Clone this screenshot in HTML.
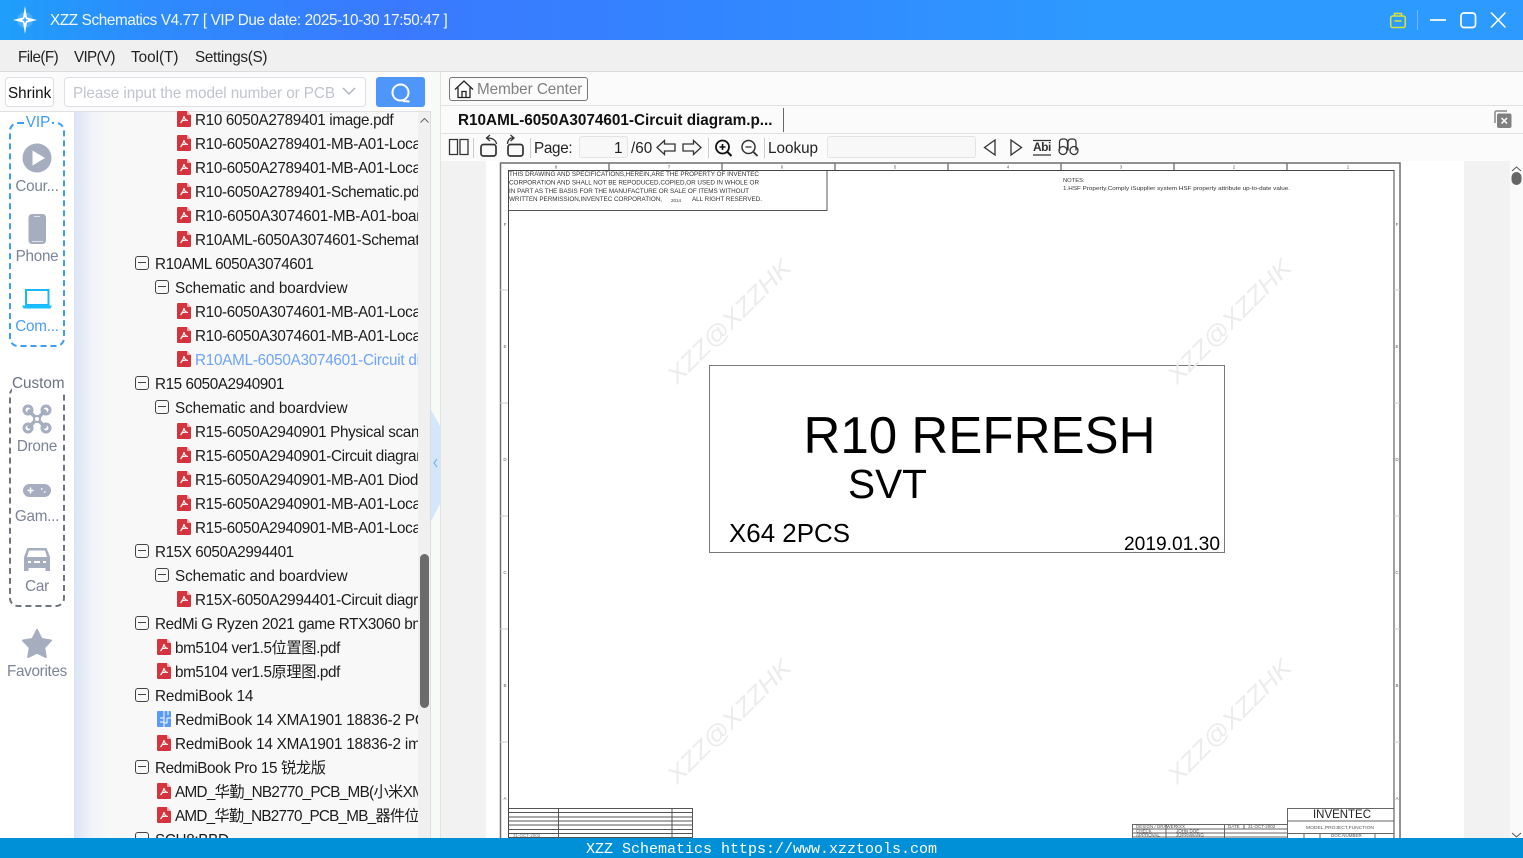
<!DOCTYPE html>
<html><head><meta charset="utf-8"><style>
*{box-sizing:border-box;margin:0;padding:0}
html,body{width:1523px;height:858px;overflow:hidden;background:#fff}
body{position:relative;font-family:"Liberation Sans","Noto Sans CJK SC",sans-serif;font-size:15.25px;color:#222}
.a{position:absolute}
.t{position:absolute;white-space:nowrap;line-height:22px}
svg{position:absolute;overflow:visible}
#tree{position:absolute;left:0;top:0;width:418px;height:838px;overflow:hidden}
.r{position:absolute;white-space:nowrap;line-height:24px;height:24px;color:#1c1c1c;letter-spacing:-.33px}
.r svg{left:0;top:2px;width:14px;height:16px}
.l3{left:177px;padding-left:18px}
.l2{left:157px;padding-left:18px}
.b1{left:135px;padding-left:20px}
.b2{left:155px;padding-left:20px;letter-spacing:-.09px}
.b1 i,.b2 i{position:absolute;left:0;top:3px;width:14px;height:14px;border:1px solid #444;border-radius:3px}
.b1 i:after,.b2 i:after{content:"";position:absolute;left:2px;right:2px;top:5px;height:1px;background:#444}
.sl{position:absolute;left:0;width:74px;text-align:center;line-height:22px;color:#7b8496;white-space:nowrap;letter-spacing:-.25px}
.sep{position:absolute;top:138px;width:1px;height:20px;background:#ccc}
</style></head><body>
<svg width="0" height="0" style="position:absolute"><defs>
<symbol id="pdf" viewBox="0 0 14 16"><path d="M1 0H10L14 4V15a1 1 0 0 1-1 1H1a1 1 0 0 1-1-1V1a1 1 0 0 1 1-1Z" fill="#d5343f"/><path d="M10 0L14 4H10Z" fill="#f2b0b4"/><path d="M7 5C6.500 7.500 5.400 10 3.500 12M7 5C7.300 7.500 8.800 9.300 11 9.600M4 10.500C6 9.300 8.500 9 10.500 9.500" stroke="#fff" stroke-width="1.100" fill="none"/></symbol>
<symbol id="pcb" viewBox="0 0 14 16"><rect width="14" height="16" rx="1" fill="#5b9bf5"/><path d="M7 0V7H3M7 7V16M11 0V4M3 11H7M10 7H14M10 7V12H7" stroke="#fff" stroke-width="1" fill="none"/></symbol>
</defs></svg>

<!-- title bar -->
<div class="a" style="left:0;top:0;width:1523px;height:40px;background:linear-gradient(90deg,#1f9ffb 0,#2d8bfd 150px,#3a79ff 400px,#3384ff 700px,#2d9aff 1100px,#2d9aff 100%)"></div>
<svg style="left:0;top:0" width="60" height="40"><path d="M25 6L27 17.500L37 20L27 22.500L25 34L23 22.500L13 20L23 17.500Z" fill="#fff"/><circle cx="25" cy="20" r="8" fill="#fff" opacity=".18"/><path d="M22.500 20H27.500M25 17.500V22.500" stroke="#2f96f8" stroke-width="1.300"/></svg>
<div class="t" style="left:50px;top:10px;color:#fff;opacity:.94;letter-spacing:-.35px">XZZ Schematics V4.77 [ VIP Due date: 2025-10-30 17:50:47 ]</div>
<svg style="left:1380px;top:0" width="143" height="40" fill="none"><rect x="10.700" y="16" width="14.600" height="11.500" rx="2" stroke="#d8e23a" stroke-width="1.500"/><path d="M14.500 16V13.500h7V16M14.500 21h7" stroke="#d8e23a" stroke-width="1.500"/><path d="M37.500 10V30" stroke="#7ab8fa"/><path d="M50 20H66" stroke="#fff" stroke-width="1.700"/><rect x="81" y="13" width="14.500" height="14.500" rx="3" stroke="#fff" stroke-width="1.700"/><path d="M111 12.500L125.500 27.500M125.500 12.500L111 27.500" stroke="#fff" stroke-width="1.600"/></svg>

<!-- menu -->
<div class="a" style="left:0;top:40px;width:1523px;height:32px;background:#f0f0f0;border-bottom:1px solid #dcdcdc"></div>
<div class="t" style="left:18px;top:47px;letter-spacing:-.55px">File(F)</div>
<div class="t" style="left:74px;top:47px;letter-spacing:-.7px">VIP(V)</div>
<div class="t" style="left:131px;top:47px">Tool(T)</div>
<div class="t" style="left:195px;top:47px;letter-spacing:-.3px">Settings(S)</div>

<!-- search row -->
<div class="a" style="left:0;top:72px;width:431px;height:40px;background:#fbfbfb;border-bottom:1px solid #e0e0e0"></div>
<div class="a" style="left:5px;top:77px;width:49px;height:30px;background:#fff;border:1px solid #dcdfe6;border-radius:4px"></div>
<div class="t" style="left:8px;top:83px;color:#111">Shrink</div>
<div class="a" style="left:64px;top:77px;width:302px;height:30px;background:#fff;border:1px solid #dcdfe6;border-radius:4px"></div>
<div class="t" style="left:73px;top:83px;color:#c0c4cc;letter-spacing:-.07px">Please input the model number or PCB</div>
<svg style="left:342px;top:87px" width="14" height="9" fill="none"><path d="M1 1L7 7L13 1" stroke="#aab0b8" stroke-width="1.300"/></svg>
<div class="a" style="left:376px;top:77px;width:49px;height:30px;background:#4f96fb;border-radius:3px"></div>
<svg style="left:390px;top:82px" width="22" height="22" fill="none"><circle cx="10.500" cy="10.500" r="8" stroke="#fff" stroke-width="2"/><path d="M13 19L19.500 19.500" stroke="#fff" stroke-width="2"/></svg>

<!-- tree bg -->
<div class="a" style="left:0;top:112px;width:74px;height:726px;background:#fff"></div>
<div class="a" style="left:74px;top:112px;width:344px;height:726px;background:linear-gradient(90deg,#dbe5f5 0,#f0f3f8 18px,#f8f8f8 36px)"></div>
<div class="a" style="left:418px;top:112px;width:13px;height:726px;background:#f0f0f0;border-right:1px solid #ddd"></div>
<div class="a" style="left:431px;top:72px;width:10px;height:766px;background:#f7fbf7;border-right:1px solid #e2e2e2"></div>
<svg style="left:431px;top:408px" width="10" height="115"><path d="M0 2L9 18V96L0 113Z" fill="#d3e7fb"/><path d="M6 51L3 55L6 59" stroke="#7fb2ea" fill="none" stroke-width="1.200"/></svg>
<svg style="left:418px;top:112px" width="13" height="20" fill="none"><path d="M2.500 10.500L6.500 6.500L10.500 10.500" stroke="#666"/></svg>
<div class="a" style="left:420px;top:554px;width:9px;height:154px;background:#6b6b6b;border-radius:5px"></div>

<div id="tree">
<div class="r l3" style="top:109px"><svg><use href="#pdf"/></svg>R10 6050A2789401 image.pdf</div>
<div class="r l3" style="top:133px"><svg><use href="#pdf"/></svg>R10-6050A2789401-MB-A01-Location</div>
<div class="r l3" style="top:157px"><svg><use href="#pdf"/></svg>R10-6050A2789401-MB-A01-Location</div>
<div class="r l3" style="top:181px"><svg><use href="#pdf"/></svg>R10-6050A2789401-Schematic.pdf</div>
<div class="r l3" style="top:205px;letter-spacing:-.22px"><svg><use href="#pdf"/></svg>R10-6050A3074601-MB-A01-boardview</div>
<div class="r l3" style="top:229px"><svg><use href="#pdf"/></svg>R10AML-6050A3074601-Schematic</div>
<div class="r b1" style="top:253px;letter-spacing:-.42px"><i></i>R10AML 6050A3074601</div>
<div class="r b2" style="top:277px"><i></i>Schematic and boardview</div>
<div class="r l3" style="top:301px"><svg><use href="#pdf"/></svg>R10-6050A3074601-MB-A01-Location</div>
<div class="r l3" style="top:325px"><svg><use href="#pdf"/></svg>R10-6050A3074601-MB-A01-Location</div>
<div class="r l3" style="top:349px;color:#6fa3f7;letter-spacing:-.25px"><svg><use href="#pdf"/></svg>R10AML-6050A3074601-Circuit diagram.pdf</div>
<div class="r b1" style="top:373px;letter-spacing:-.42px"><i></i>R15 6050A2940901</div>
<div class="r b2" style="top:397px"><i></i>Schematic and boardview</div>
<div class="r l3" style="top:421px"><svg><use href="#pdf"/></svg>R15-6050A2940901 Physical scanning</div>
<div class="r l3" style="top:445px"><svg><use href="#pdf"/></svg>R15-6050A2940901-Circuit diagram</div>
<div class="r l3" style="top:469px"><svg><use href="#pdf"/></svg>R15-6050A2940901-MB-A01 Diode</div>
<div class="r l3" style="top:493px"><svg><use href="#pdf"/></svg>R15-6050A2940901-MB-A01-Location</div>
<div class="r l3" style="top:517px"><svg><use href="#pdf"/></svg>R15-6050A2940901-MB-A01-Location</div>
<div class="r b1" style="top:541px;letter-spacing:-.42px"><i></i>R15X 6050A2994401</div>
<div class="r b2" style="top:565px"><i></i>Schematic and boardview</div>
<div class="r l3" style="top:589px"><svg><use href="#pdf"/></svg>R15X-6050A2994401-Circuit diagram</div>
<div class="r b1" style="top:613px;letter-spacing:-.36px"><i></i>RedMi G Ryzen 2021 game RTX3060 bm5104</div>
<div class="r l2" style="top:637px;letter-spacing:-.4px"><svg><use href="#pdf"/></svg>bm5104 ver1.5位置图.pdf</div>
<div class="r l2" style="top:661px;letter-spacing:-.4px"><svg><use href="#pdf"/></svg>bm5104 ver1.5原理图.pdf</div>
<div class="r b1" style="top:685px;letter-spacing:-.15px"><i></i>RedmiBook 14</div>
<div class="r l2" style="top:709px;letter-spacing:-.2px"><svg><use href="#pcb"/></svg>RedmiBook 14 XMA1901 18836-2 PCB</div>
<div class="r l2" style="top:733px;letter-spacing:-.2px"><svg><use href="#pdf"/></svg>RedmiBook 14 XMA1901 18836-2 image</div>
<div class="r b1" style="top:757px;letter-spacing:-.37px"><i></i>RedmiBook Pro 15 锐龙版</div>
<div class="r l2" style="top:781px;letter-spacing:-.68px"><svg><use href="#pdf"/></svg>AMD_华勤_NB2770_PCB_MB(小米XMA1</div>
<div class="r l2" style="top:805px;letter-spacing:-.75px"><svg><use href="#pdf"/></svg>AMD_华勤_NB2770_PCB_MB_器件位号</div>
<div class="r b1" style="top:829px"><i></i>SCH8:BBD</div>
</div>

<!-- sidebar -->
<div class="a" style="left:9px;top:122px;width:56px;height:225px;border:2px dashed #3d9cf5;border-radius:9px"></div>
<div class="t" style="left:24px;top:112px;width:28px;text-align:center;background:#fff;color:#3d9cf5;line-height:20px;margin-top:1px">VIP</div>
<svg style="left:0;top:110px" width="74" height="240"><circle cx="37" cy="48" r="14.500" fill="#a5adbf"/><path d="M32.500 40.500L45 48L32.500 55.500Z" fill="#fff"/><rect x="28.500" y="104" width="17.500" height="30" rx="3.500" fill="#a5adbf"/><path d="M34 106.500h6M32 131.500h11" stroke="#dfe2e8"/><rect x="26" y="180" width="22.500" height="15" fill="none" stroke="#1ab8f8" stroke-width="2"/><path d="M22 195.500h30l-1.500 3h-27Z" fill="#18c0ff"/></svg>
<div class="sl" style="top:176px">Cour...</div>
<div class="sl" style="top:246px">Phone</div>
<div class="sl" style="top:316px;color:#4b9cf5">Com...</div>

<div class="a" style="left:9px;top:386px;width:56px;height:221px;border:2px dashed #6e7482;border-radius:9px"></div>
<div class="t" style="left:12px;top:374px;width:52px;height:20px;line-height:20px;text-align:center;background:#fff;color:#6b7280">Custom</div>
<svg style="left:0;top:370px" width="74" height="320" fill="none"><path d="M28 40L46 58M46 40L28 58" stroke="#a5adbf" stroke-width="3.500"/><g stroke="#a5adbf" stroke-width="3"><circle cx="28" cy="40" r="4"/><circle cx="46" cy="40" r="4"/><circle cx="28" cy="58" r="4"/><circle cx="46" cy="58" r="4"/></g><circle cx="37" cy="49" r="3" fill="#fff" stroke="#a5adbf" stroke-width="2"/><rect x="23" y="114" width="28" height="13" rx="6.500" fill="#a5adbf"/><path d="M27.500 120.500h6M30.500 117.500v6M41 119h1.500M44 122h1.500" stroke="#fff" stroke-width="1.500"/><path d="M24 187l3.500-9h19l3.500 9v14h-4.500v-3h-17v3H24Z" fill="#a5adbf"/><path d="M29 180.500h16l2 6.500H27Z" fill="#fff"/><path d="M28 192h3M34 192h6M43 192h3" stroke="#fff" stroke-width="2"/><path d="M37 260l4.500 9 9.500 1.500-6.800 7 1.600 9.500-8.800-4.300-8.800 4.300 1.600-9.500-6.800-7 9.500-1.500Z" fill="#a5adbf" stroke="#a5adbf" stroke-width="2" stroke-linejoin="round"/></svg>
<div class="sl" style="top:436px">Drone</div>
<div class="sl" style="top:506px">Gam...</div>
<div class="sl" style="top:576px">Car</div>
<div class="sl" style="top:661px;letter-spacing:-.3px">Favorites</div>

<!-- right rows -->
<div class="a" style="left:441px;top:72px;width:1082px;height:34px;background:#fbfbfb;border-bottom:1px solid #e0e0e0"></div>
<div class="a" style="left:449px;top:77px;width:139px;height:24px;border:1px solid #777;border-radius:3px"></div>
<svg style="left:454px;top:79px" width="20" height="20" fill="none" stroke="#222" stroke-width="1.300"><path d="M1 10.500L10 2L19 10.500M4 8.500V18.500H16V8.500M8 18.500V12.500H12V18.500"/></svg>
<div class="t" style="left:477px;top:79px;color:#808080;letter-spacing:-.05px">Member Center</div>
<div class="a" style="left:441px;top:106px;width:1082px;height:28px;background:#fbfbfb;border-bottom:1px solid #e0e0e0"></div>
<div class="t" style="left:458px;top:110px;font-weight:700;color:#111;font-size:15.300px">R10AML-6050A3074601-Circuit diagram.p...</div>
<div class="a" style="left:783px;top:108px;width:1px;height:24px;background:#666"></div>
<svg style="left:1493px;top:109px" width="20" height="20"><path d="M2 14V3.500A1.500 1.500 0 0 1 3.500 2H14" fill="none" stroke="#888" stroke-width="1.500"/><rect x="4" y="4.500" width="14.500" height="14.500" rx="2" fill="#808080"/><path d="M8.500 9L14 14.500M14 9L8.500 14.500" stroke="#fff" stroke-width="1.500"/></svg>

<!-- toolbar -->
<div class="a" style="left:441px;top:134px;width:1082px;height:27px;background:#fbfbfb"></div>
<svg style="left:445px;top:132px" width="640" height="30" fill="none" stroke="#333" stroke-width="1.300"><path d="M4.500 7.500h8v15h-8ZM15 7.500h8v15h-8Z"/><rect x="36" y="12.500" width="15" height="11.500" rx="2.500" stroke-width="1.700"/><path d="M41 6H43C47 6 51 8 51.500 12M45 3L41.500 6L45 9"/><rect x="63" y="12.500" width="15" height="11.500" rx="2.500" stroke-width="1.700"/><path d="M69 6H67C65 6 62.500 8 62.500 12M65.500 3L69 6L65.500 9"/><path d="M212 15.500L219.500 8.500V12H230V19H219.500V22.500Z"/><path d="M256 15.500L248.500 8.500V12H238V19H248.500V22.500Z"/><circle cx="277.500" cy="15" r="6.500" stroke="#111" stroke-width="1.800"/><path d="M282.500 20L286.500 24" stroke="#111" stroke-width="2"/><path d="M274.500 15h6M277.500 12v6" stroke="#111" stroke-width="1.600"/><circle cx="303.500" cy="15" r="6.500" stroke-width="1.500"/><path d="M308.500 20L312.500 24" stroke-width="1.800"/><path d="M300.500 15h6"/><path d="M550 8L539.500 15.500L550 23Z"/><path d="M566 8L576.500 15.500L566 23Z"/><path d="M588 8.500H606M588 23H606" stroke-width="1.200"/><path d="M614.500 18.500V10a3 3 0 0 1 3-3h2a3 3 0 0 1 3 3v8.500M623 10v8.500M623 10a3 3 0 0 1 3-3h2a3 3 0 0 1 3 3v8.500"/><circle cx="618" cy="18.500" r="4"/><circle cx="629" cy="18.500" r="4"/></svg>
<div class="t" style="left:1033px;top:136px;font-size:12px;font-weight:700;color:#333;letter-spacing:-.5px">Abi</div>
<div class="sep" style="left:473px"></div><div class="sep" style="left:530px"></div><div class="sep" style="left:708px"></div><div class="sep" style="left:764px"></div>
<div class="t" style="left:534px;top:138px;color:#222;letter-spacing:-.3px">Page:</div>
<div class="a" style="left:579px;top:136px;width:49px;height:22px;background:#f8f8f8;border:1px solid #e4e4e4;border-radius:3px"></div>
<div class="t" style="left:614px;top:138px;color:#222">1</div>
<div class="t" style="left:631px;top:138px;color:#222">/60</div>
<div class="t" style="left:768px;top:138px;color:#222">Lookup</div>
<div class="a" style="left:827px;top:136px;width:149px;height:22px;background:#f8f8f8;border:1px solid #e4e4e4;border-radius:3px"></div>

<!-- viewer -->
<div class="a" style="left:441px;top:161px;width:1069px;height:677px;background:#f2f2f2"></div>
<div class="a" style="left:1510px;top:161px;width:13px;height:677px;background:#fafafa"></div>
<svg style="left:1510px;top:161px" width="13" height="677" fill="none"><path d="M2 10L6.500 6L11 10" stroke="#555"/><rect x="1.500" y="11" width="10" height="13" rx="5" fill="#666"/><path d="M2 672L6.500 676L11 672" stroke="#555"/></svg>
<div class="a" style="left:486px;top:161px;width:978px;height:677px;background:#fff"></div>

<svg style="left:0;top:0" width="1523" height="838" viewBox="0 0 1523 838" font-family="Liberation Sans, sans-serif">
<g fill="none" stroke="#6e6e6e">
<rect x="500.500" y="163" width="899.500" height="700" stroke-width="1.500"/>
<rect x="508.500" y="170.500" width="885.500" height="690" stroke="#444"/>
<path d="M609 163V170M722 163V170M835 163V170M948 163V170M1061 163V170M1174 163V170M1287 163V170" stroke-width="1.300"/>
<path d="M500 290H508M500 403H508M500 516H508M500 629H508M500 742H508M1394 290H1400M1394 403H1400M1394 516H1400M1394 629H1400M1394 742H1400" stroke="#ccc"/>
<path d="M508.500 210.500H827V170.500" stroke="#555"/>
<path d="M508.500 808.500H693M508.500 812.500H693M508.500 817H693M508.500 821H693M508.500 825H693M508.500 829.500H693M508.500 833.500H693M508.500 837.500H693M558.500 808V838M672 808V838M692.500 808V838" stroke="#555"/>
<path d="M1287.500 838V808.500H1394M1287 821H1394M1287 833.500H1394M1132.500 838V824.500H1287M1132 829H1287M1132 833H1287M1132 837H1287M1166 824V838M1224.500 824V838M1244 824V829M1304 833V838M1320 833V838M1375 833V838" stroke="#666"/>
<rect x="709.500" y="365.500" width="515" height="187" stroke="#777"/>
</g>
<g fill="#333" font-size="6.400">
<text x="509" y="176" textLength="250" lengthAdjust="spacingAndGlyphs">THIS DRAWING AND SPECIFICATIONS,HEREIN,ARE THE PROPERTY OF INVENTEC</text>
<text x="509" y="184.500" textLength="250" lengthAdjust="spacingAndGlyphs">CORPORATION AND SHALL NOT BE REPODUCED,COPIED,OR USED IN WHOLE OR</text>
<text x="509" y="193" textLength="240" lengthAdjust="spacingAndGlyphs">IN PART AS THE BASIS FOR THE MANUFACTURE OR SALE OF ITEMS WITHOUT</text>
<text x="509" y="201" textLength="153" lengthAdjust="spacingAndGlyphs">WRITTEN PERMISSION,INVENTEC CORPORATION,</text>
<text x="671" y="202" font-size="4.500">2014</text>
<text x="692" y="201" textLength="70" lengthAdjust="spacingAndGlyphs">ALL RIGHT RESERVED.</text>
<text x="1063" y="182" font-size="5.800">NOTES:</text>
<text x="1063" y="190" textLength="227" font-size="5.800" lengthAdjust="spacingAndGlyphs">1.HSF Property.Comply iSupplier system HSF property attribute up-to-date value.</text>
</g>
<g fill="#555" font-size="4.500" text-anchor="middle">
<text x="556" y="168.500">8</text><text x="669" y="168.500">7</text><text x="782" y="168.500">6</text><text x="895" y="168.500">5</text><text x="1008" y="168.500">4</text><text x="1121" y="168.500">3</text><text x="1234" y="168.500">2</text><text x="1348" y="168.500">1</text>
<text x="505" y="226">F</text><text x="505" y="348">E</text><text x="505" y="461">D</text><text x="505" y="574">C</text><text x="505" y="687">B</text><text x="505" y="800">A</text>
<text x="1397" y="226">F</text><text x="1397" y="348">E</text><text x="1397" y="461">D</text><text x="1397" y="574">C</text><text x="1397" y="687">B</text><text x="1397" y="800">A</text>
</g>
<g fill="#ececec" font-size="24" font-style="italic">
<text transform="translate(677,385) rotate(-45)" textLength="164" lengthAdjust="spacingAndGlyphs">XZZ@XZZHK</text>
<text transform="translate(1177,385) rotate(-45)" textLength="164" lengthAdjust="spacingAndGlyphs">XZZ@XZZHK</text>
<text transform="translate(677,785) rotate(-45)" textLength="164" lengthAdjust="spacingAndGlyphs">XZZ@XZZHK</text>
<text transform="translate(1177,785) rotate(-45)" textLength="164" lengthAdjust="spacingAndGlyphs">XZZ@XZZHK</text>
</g>
<g fill="#000">
<text x="803.500" y="453" font-size="52" textLength="352" lengthAdjust="spacingAndGlyphs">R10 REFRESH</text>
<text x="848" y="498" font-size="41" textLength="79" lengthAdjust="spacingAndGlyphs">SVT</text>
<text x="729" y="542" font-size="26" textLength="121" lengthAdjust="spacingAndGlyphs">X64 2PCS</text>
<text x="1124" y="550" font-size="19.500" textLength="96" lengthAdjust="spacingAndGlyphs">2019.01.30</text>
<text x="1313" y="818" font-size="11.500" fill="#222" textLength="58" lengthAdjust="spacingAndGlyphs">INVENTEC</text>
</g>
<g fill="#555" font-size="4.500">
<text x="1306" y="829" textLength="68" lengthAdjust="spacingAndGlyphs">MODEL,PROJECT,FUNCTION</text>
<text x="1136" y="828">DESIGN / DRAWER</text><text x="1176" y="828">XXX</text><text x="1228" y="828">DATE</text><text x="1248" y="828">31-OCT-2002</text>
<text x="1136" y="832.500">CHECK</text><text x="1176" y="832.500">JOHN DOE</text>
<text x="1136" y="836.500">APPROVAL</text><text x="1176" y="836.500">JUPPAWANG</text>
<text x="1331" y="837">DOC.NUMBER</text><text x="513" y="837" fill="#777">31-OCT-2002</text>
</g>
</svg>

<!-- bottom bar -->
<div class="a" style="left:0;top:838px;width:1523px;height:20px;background:#0090d8"></div>
<div class="t" style="left:586px;top:839px;color:#fff;font-family:'Liberation Mono',monospace;font-size:15px">XZZ Schematics https://www.xzztools.com</div>
</body></html>
